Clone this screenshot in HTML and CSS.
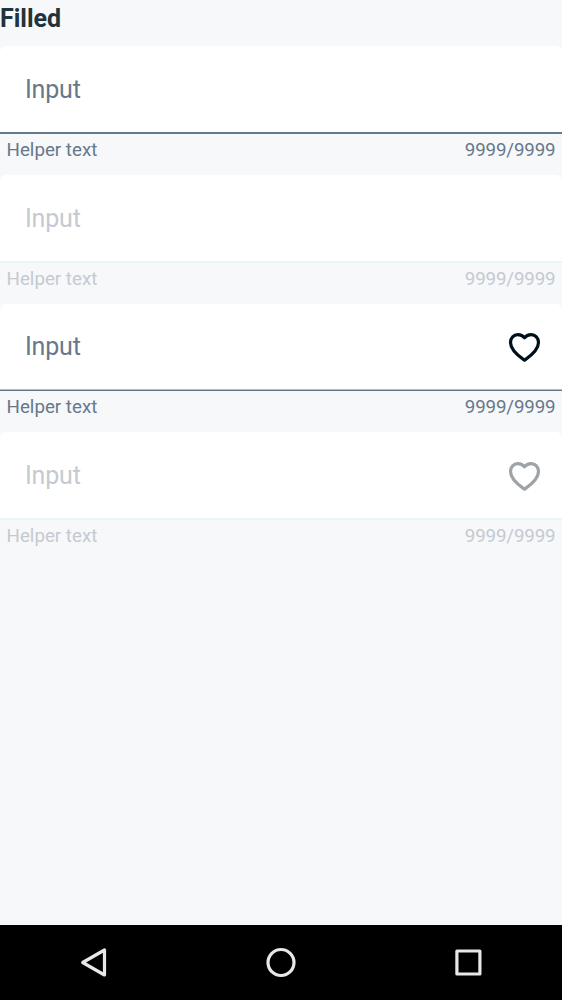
FILE: index.html
```html
<!DOCTYPE html>
<html lang="en">
<head>
<meta charset="utf-8">
<title>Filled inputs</title>
<link rel="stylesheet" href="styles.css">
</head>
<body>
<main class="content">
  <h1 class="title">Filled</h1>
  <section class="field">
    <div class="box"><span class="label">Input</span></div>
    <div class="helper"><span>Helper text</span><span>9999/9999</span></div>
  </section>
  <section class="field disabled">
    <div class="box"><span class="label">Input</span></div>
    <div class="helper"><span>Helper text</span><span>9999/9999</span></div>
  </section>
  <section class="field with-icon">
    <div class="box"><span class="label">Input</span>
      <svg class="heart" viewBox="-0.5 0 38 38"><path d="M19 32.2C15 29.4 5 22.8 5 14.5C5 9.8 8.2 6.6 12.3 6.6C15.2 6.6 17.6 7.8 19 9.8C20.4 7.8 22.8 6.6 25.7 6.6C29.8 6.6 33 9.8 33 14.5C33 22.8 23 29.4 19 32.2Z"/></svg>
    </div>
    <div class="helper"><span>Helper text</span><span>9999/9999</span></div>
  </section>
  <section class="field disabled">
    <div class="box"><span class="label">Input</span>
      <svg class="heart" viewBox="-0.5 0 38 38"><path d="M19 32.2C15 29.4 5 22.8 5 14.5C5 9.8 8.2 6.6 12.3 6.6C15.2 6.6 17.6 7.8 19 9.8C20.4 7.8 22.8 6.6 25.7 6.6C29.8 6.6 33 9.8 33 14.5C33 22.8 23 29.4 19 32.2Z"/></svg>
    </div>
    <div class="helper"><span>Helper text</span><span>9999/9999</span></div>
  </section>
</main>
<nav class="navbar">
  <svg viewBox="0 0 40 40"><path d="M30.5 7V32L8.7 19.5Z"/></svg>
  <svg viewBox="0 0 40 40"><circle cx="20" cy="19.5" r="13"/></svg>
  <svg viewBox="0 0 40 40"><rect x="8.9" y="8" width="23" height="23"/></svg>
</nav>
</body>
</html>
```
FILE: styles.css
```css
body {
  margin: 0;
  height: 1000px;
  display: flex;
  flex-direction: column;
  background: #f6f8fa;
  font-family: Roboto, sans-serif;
  overflow: hidden;
}
.content { flex: 1; }
.title {
  margin: 0;
  height: 46px;
  font-size: 25px;
  line-height: 37px;
  font-weight: 700;
  color: #21333b;
}
.field { height: 128.75px; }
.box {
  box-sizing: border-box;
  height: 88px;
  display: flex;
  align-items: center;
  justify-content: space-between;
  padding: 2px 19px 0 25px;
  background: #fff;
  border-bottom: 2px solid #67788a;
  border-radius: 6px 6px 0 0;
}
.label { font-size: 25px; line-height: 38px; letter-spacing: -0.2px; color: #67788a; }
.helper {
  display: flex;
  justify-content: space-between;
  padding: 0 6.5px;
  font-size: 18.75px;
  line-height: 32px;
  color: #67788a;
}
.helper span:last-child { letter-spacing: -0.15px; }
.with-icon .box {
  height: 87.25px;
  padding-top: 1.5px;
  border-bottom-width: 1px;
  box-shadow: inset 0 -1px #b4bdc6;
}
.disabled .box { border-color: #ebf4f9; }
.disabled .label, .disabled .helper { color: #c5cad1; }
.heart {
  width: 38px;
  height: 38px;
  fill: none;
  stroke: #00101a;
  stroke-width: 3.2;
  stroke-linejoin: round;
}
.disabled .heart { stroke: #9ea3a7; }
.navbar {
  height: 75px;
  display: flex;
  justify-content: space-around;
  align-items: center;
  background: #000;
}
.navbar svg {
  width: 40px;
  height: 40px;
  fill: none;
  stroke: #e8e8e8;
  stroke-width: 3.2;
  stroke-linejoin: round;
}
```
